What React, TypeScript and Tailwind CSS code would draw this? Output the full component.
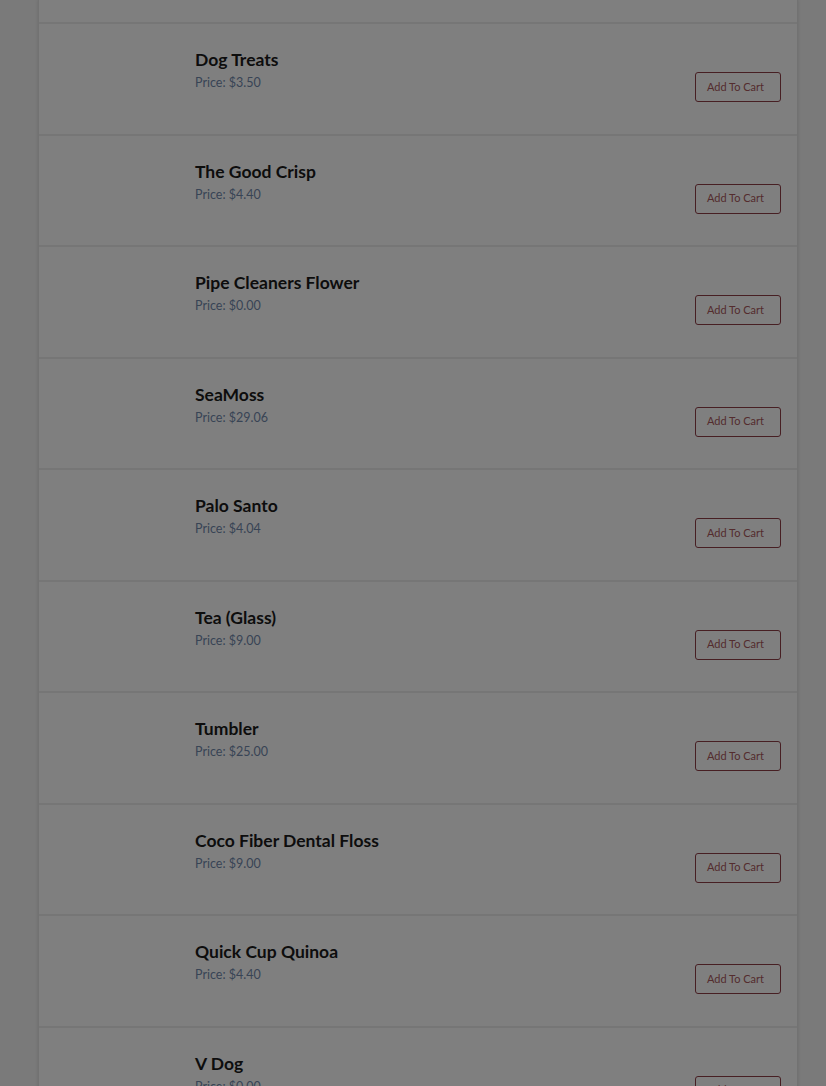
import React from "react";

const items = [
  { name: "Dog Treats", price: "$3.50" },
  { name: "The Good Crisp", price: "$4.40" },
  { name: "Pipe Cleaners Flower", price: "$0.00" },
  { name: "SeaMoss", price: "$29.06" },
  { name: "Palo Santo", price: "$4.04" },
  { name: "Tea (Glass)", price: "$9.00" },
  { name: "Tumbler", price: "$25.00" },
  { name: "Coco Fiber Dental Floss", price: "$9.00" },
  { name: "Quick Cup Quinoa", price: "$4.40" },
  { name: "V Dog", price: "$0.00" },
];

export default function App() {
  return (
    <div
      className="relative h-[1086px] w-full overflow-hidden bg-[#f4f4f4]"
      style={{ fontFamily: "Lato, 'Noto Sans', sans-serif" }}
    >
      <div className="ml-[38px] w-[760px] border-x border-[#e4e4e4] bg-white shadow-[0_0_3px_rgba(0,0,0,0.12)]">
        <div className="h-[24px] border-b-2 border-[#ececec]" />
        {items.map((it, i) => (
          <div
            key={i}
            className="flex h-[111.5px] border-b-2 border-[#ececec] pl-[156px] pr-[16px] pt-[25px]"
          >
            <div className="flex-1">
              <div className="text-[17.5px] font-bold leading-[22px] text-[#1a1a1a]">
                {it.name}
              </div>
              <div className="mt-[3px] text-[12.5px] leading-[18px] text-[#7188ab]">
                Price: {it.price}
              </div>
            </div>
            <button className="mt-[23px] h-[30px] self-start rounded-[3px] border border-[#8e3e46] bg-white pl-[11px] pr-[16px] text-[11px] text-[#a8585c]">
              Add To Cart
            </button>
          </div>
        ))}
      </div>
      <div className="absolute inset-0 bg-black/50" />
    </div>
  );
}
